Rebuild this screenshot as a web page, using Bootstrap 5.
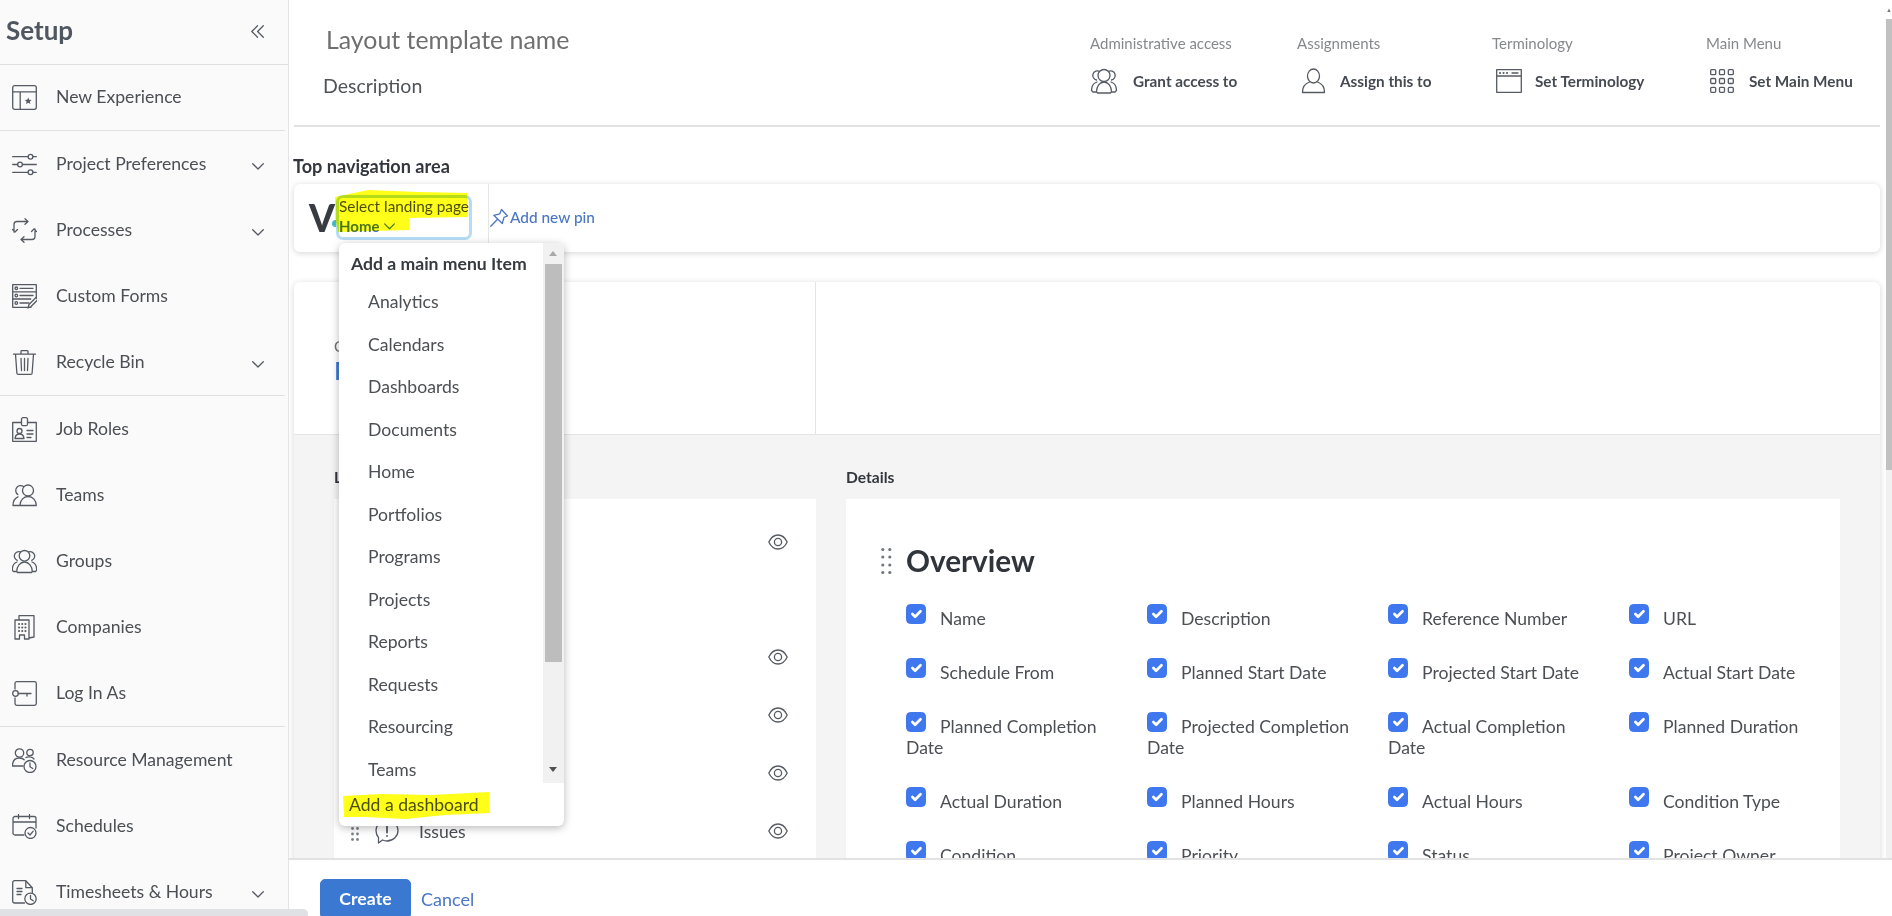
<!doctype html>
<html lang="en"><head><meta charset="utf-8"><title>Layout template</title>
<link href="https://cdn.jsdelivr.net/npm/bootstrap@5.3.0/dist/css/bootstrap.min.css" rel="stylesheet">
<style>
html,body{height:916px;overflow:hidden}
body{font-family:"Lato","Open Sans",sans-serif;font-size:17.6px;color:#4c4f54;background:#fff}
.ico{fill:none;stroke:#565b63;stroke-width:1.3;stroke-linecap:round;stroke-linejoin:round;flex:none}
.ico.chev-blue{stroke:#4a76c4}
.page-wrap{height:916px}
.side-pane{width:289px;flex:none;background:#fafafa;border-right:1px solid #e4e4e4;overflow:hidden}
.side-head{height:65px;flex:none;border-bottom:1px solid #e0e0e0;padding:0 24px 2px 6px}
.side-title{font-size:26px;font-weight:700;color:#505760;margin:0;line-height:1.2}
.side-group{flex:none;border-bottom:1px solid #e0e0e0;margin-right:3px}
.side-group:last-child{border-bottom:0}
.side-row{height:66px;padding:0 21px 0 12px;gap:19px}
.side-row.short-row{height:65px}
.side-row .chev{margin-left:auto;margin-top:4px}
.hbar{position:absolute;left:0;bottom:0;width:308px;height:7px;background:#dfe1e5;border-top-right-radius:5px;z-index:5}
.main-pane{min-width:0}
.view-area{min-height:0;overflow:hidden}
.view-col{padding-left:5px;min-width:0}
.rail{width:6px;margin-left:6px;flex:none;background:#f1f1f1}
.rail-top{height:19px;background:#fff;color:#777;font-size:6px;line-height:19px;text-align:center}
.rail-thumb{height:451px;background:#c1c1c1}
.top-head{height:127px;border-bottom:2px solid #e2e2e2}
.name-col{padding:23px 0 0 30px}
.tpl-name{font-size:24.9px;color:#6f6f6f;line-height:32px;margin:0 0 0 2px}
.tpl-desc{font-size:19.5px;color:#505357;line-height:26px;margin-top:18px;margin-left:-1px}
.acts{display:grid;grid-template-columns:207px 195px 214px 174px;padding-top:33px}
.act-label{font-size:15px;color:#86898c;line-height:20px;margin-bottom:14px}
.act-row{height:28px}
.act-icon{width:43px;flex:none}
.act-text{font-size:15.3px;font-weight:700;color:#464a52}
.sect-label{font-size:18.1px;font-weight:700;color:#33373d;line-height:22px;margin:28px 0 7px -1px}
.soft-card{background:#fff;border-radius:6px;box-shadow:0 1px 6px rgba(0,0,0,.17)}
.nav-card{height:68px;margin-bottom:30px}
.logo-slot{width:42px;flex:none;position:relative;padding-left:15px;font-size:37px;font-weight:900;color:#383b3f;line-height:68px}
.logo-dot{position:absolute;left:38px;top:36px;width:7px;height:7px;border-radius:50%;background:#45b7c4}
.land-slot{width:153px;flex:none;position:relative;border-right:1px solid #e6e6e6;height:68px;padding-top:11px}
.land-box{position:relative;width:136px;height:45px;border:3px solid #b6dcf5;border-radius:7px}
.land-top{font-size:15.4px;line-height:19px;margin-top:-1px;white-space:nowrap;color:#4c4f54}
.land-home{font-size:15px;font-weight:700;line-height:20px;color:#4a76c4}
.marker{position:absolute;mix-blend-mode:multiply;pointer-events:none}
.marker-top{left:-6px;top:-9px;z-index:2}
.pin-link{font-size:15.4px;font-weight:500;color:#4a76c4;gap:1px;text-decoration:none}
.pick-menu{display:flex;flex-direction:column;position:absolute;left:3px;top:59px;width:225px;height:583px;padding:0;margin:0;border:0;border-radius:6px;box-shadow:0 2px 9px rgba(0,0,0,.28);z-index:20;overflow:hidden;color:#4c4f54;font-size:17.6px}
.pick-body{height:540px;flex:none}
.pick-list{min-width:0}
.pick-title{height:38px;padding:4px 0 0 12px;line-height:34px;font-size:17.6px;font-weight:700;color:#363a40;white-space:nowrap}
.pick-item{height:42.5px;line-height:42.5px;padding:0 0 0 29px;color:#4c4f54}
.pick-rail{width:21px;flex:none;background:#f1f1f1;padding:0 2px}
.arrow-up,.arrow-dn{height:21px;position:relative}
.arrow-up:after,.arrow-dn:after{content:"";position:absolute;left:4px;border-left:4.5px solid transparent;border-right:4.5px solid transparent}
.arrow-up:after{top:8px;border-bottom:5px solid #a8a8a8}
.arrow-dn:after{top:5px;border-top:5px solid #505050}
.pick-thumb{height:398px;background:#bdbdbd}
.pick-foot{position:relative;flex:1;padding:5px 0 0 10px;line-height:34px;color:#4c4f54}
.marker-foot{left:2px;top:8px}
.lay-card{overflow:hidden;border-radius:6px 6px 0 0;height:620px}
.lay-top{height:153px;border-bottom:1px solid #e4e4e4}
.lay-top-left{width:522px;flex:none;border-right:1px solid #e4e4e4;padding:3px 0 0 40px}
.ghost-a{font-size:15px;line-height:20px;color:#6d7074}
.ghost-b{font-size:25px;font-weight:500;line-height:28px;color:#3a78d2}
.lay-low{background:#f4f4f4;padding:31px 40px 0;height:467px;gap:30px}
.low-left{width:482px;flex:none}
.low-right{width:994px;flex:none}
.low-label{font-size:15.6px;font-weight:700;color:#33373d;line-height:22px;margin-bottom:11px}
.panel-white{background:#fff;height:400px}
.panel-left{padding-top:14px}
.vis-row{height:58px;padding:0 28px 0 17px}
.vis-row.first-row{margin-bottom:57px}
.vis-name{margin:3px 0 0 20px}
.panel-right{padding:44px 0 0 35px}
.ov-head{height:36px;margin-bottom:29px}
.grip-slot{width:25px;flex:none}
.ov-title{font-size:29.7px;font-weight:700;color:#30353c;line-height:36px;margin:0}
.field-grid{display:grid;grid-template-columns:repeat(4,241px);padding-left:25px}
.field-cell{line-height:21px;padding:0 36px 33px 0}
.field-check{width:20px;height:20px;margin:-4px 14px 0 0;vertical-align:top;border-radius:3px;float:none}
.field-check:checked{background-color:#3f78ee;border-color:#3f78ee}
.foot-bar{height:58px;flex:none;border-top:2px solid #e2e2e2;background:#fff;padding:19px 0 0 31px;overflow:hidden;gap:10px}
.go-btn{width:91px;height:40px;padding:0;background:#3a78d2;border-color:#3a78d2;font-size:17.7px;font-weight:700;border-radius:5px;line-height:38px}
.stop-link{font-size:18px;color:#4a76c4;text-decoration:none;line-height:40px}
</style></head>
<body>
<svg width="0" height="0" class="position-absolute">
<defs>
<symbol id="i-chev" viewBox="0 0 12 7"><path d="M.7.7 6 6l5.3-5.3"/></symbol>
<symbol id="i-eye" viewBox="0 0 20 16"><path d="M.8 8C3 3.4 6.2 1 10 1s7 2.4 9.2 7c-2.2 4.600-5.400 7-9.200 7S3 12.600.8 8Z"/><circle cx="10" cy="8" r="3.600"/></symbol>
</defs>
</svg>
<div class="page-wrap d-flex position-relative">
<aside class="side-pane d-flex flex-column">
<div class="side-head d-flex align-items-center justify-content-between">
<h1 class="side-title">Setup</h1>
<svg class="ico" width="13" height="13" viewBox="0 0 13 13"><path d="M6.500.8.800 6.500l5.700 5.700M12.300.8 6.600 6.500l5.700 5.700"/></svg>
</div>
<div class="side-group">
<div class="side-row short-row d-flex align-items-center"><svg class="ico" width="25" height="25" viewBox="0 0 25 25"><rect x=".7" y=".7" width="23.600" height="23.600" rx="2"/><path d="M.7 6.800h23.600M8.200 6.800v17.500"/><path d="m16.200 12.500 1 2.300 2.500.2-1.900 1.600.6 2.400-2.200-1.300-2.200 1.300.6-2.400-1.900-1.600 2.500-.2Z" fill="#565b63" stroke="none"/></svg><span>New Experience</span></div>
</div>
<div class="side-group">
<div class="side-row d-flex align-items-center"><svg class="ico" width="25" height="25" viewBox="0 0 25 25"><path d="M.7 4.700h15.300M21 4.700h3.300M.7 12.500h5M10.500 12.500h13.800M.7 20.300h15.300M21 20.300h3.300"/><circle cx="18.500" cy="4.700" r="2.400"/><circle cx="8" cy="12.500" r="2.400"/><circle cx="18.500" cy="20.300" r="2.400"/></svg><span>Project Preferences</span><svg class="ico chev" width="12" height="7"><use href="#i-chev"/></svg></div>
<div class="side-row d-flex align-items-center"><svg class="ico" width="25" height="25" viewBox="0 0 25 25"><path d="M2 14V6.500a3 3 0 0 1 3-3h10.500M13 .8l3 2.700-3 2.700M23 11v7.500a3 3 0 0 1-3 3H9.500M12 18.800l-3 2.700 3 2.700M.5 11.500 3 14l2.500-2.500M19.500 13.500 22 11l2.500 2.500"/></svg><span>Processes</span><svg class="ico chev" width="12" height="7"><use href="#i-chev"/></svg></div>
<div class="side-row d-flex align-items-center"><svg class="ico" width="25" height="25" viewBox="0 0 25 25"><path d="M19 23.300H.7V.7h23.600v15"/><path d="M.7 7.800h23.600M.7 15h18M8 4.300h13M8 11.500h13M8 19h9"/><circle cx="4.300" cy="4.300" r="1.300"/><circle cx="4.300" cy="11.500" r="1.300"/><circle cx="4.300" cy="19" r="1.300"/><path d="m16 24 1-3.500 7-7 2 2-7 7Z" fill="#fafafa"/></svg><span>Custom Forms</span></div>
<div class="side-row d-flex align-items-center"><svg class="ico" width="25" height="25" viewBox="0 0 25 25"><path d="M1.500 4.200h22M9 4V1.300a.6.6 0 0 1 .6-.6h5.800a.6.6 0 0 1 .6.600V4M3.500 4.200l1.400 19a1.200 1.200 0 0 0 1.200 1.100h12.800a1.200 1.200 0 0 0 1.200-1.100l1.400-19M9 8.500l.5 12M12.500 8.500v12M16 8.500l-.5 12"/></svg><span>Recycle Bin</span><svg class="ico chev" width="12" height="7"><use href="#i-chev"/></svg></div>
</div>
<div class="side-group">
<div class="side-row d-flex align-items-center"><svg class="ico" width="25" height="25" viewBox="0 0 25 25"><path d="M9.500 5.500H.7v18.800h23.600V5.500h-8.800"/><rect x="9.500" y=".7" width="6" height="8" rx="1.500"/><circle cx="7.500" cy="14" r="2.500"/><path d="M3 21.500c.3-3 2-4.500 4.500-4.500s4.200 1.500 4.500 4.500ZM15 13.500h6M15 17h6M15 20.500h4"/></svg><span>Job Roles</span></div>
<div class="side-row d-flex align-items-center"><svg class="ico" width="25" height="25" viewBox="0 0 25 25"><circle cx="16" cy="7.500" r="5.500"/><path d="M11.500 3.500A4.700 4.700 0 1 0 5.800 11.500M8 22.500h16.300c0-5-3.500-9-8.200-9s-8.100 4-8.100 9ZM1 22.500h7M1 22.500c0-4.500 2-7.500 5-8.700"/></svg><span>Teams</span></div>
<div class="side-row d-flex align-items-center"><svg class="ico" width="25" height="25" viewBox="0 0 25 25"><circle cx="12.500" cy="6.800" r="5.300"/><path d="M8.300 2.900A4.300 4.300 0 1 0 5.300 11.300M16.700 2.900A4.300 4.300 0 1 1 19.700 11.300M5.500 23.500h14l.8-1c0-5-3.500-9.500-7.800-9.500s-7.800 4.500-7.800 9.500ZM5 13C2 14 .3 17.500.3 21l1 1.500h3M20 13c3 1 4.700 4.500 4.700 8l-1 1.500h-3"/></svg><span>Groups</span></div>
<div class="side-row d-flex align-items-center"><svg class="ico" width="25" height="25" viewBox="0 0 25 25"><path d="M3 24V5h14v19h-4.500v-4h-5v4ZM7 5V.7h15V22l-5 1"/><path d="M7 9h.1M10.200 9h.1M13.400 9h.1M7 12.500h.1M10.200 12.500h.1M13.400 12.500h.1M7 16h.1M10.200 16h.1M13.400 16h.1" stroke-width="2"/></svg><span>Companies</span></div>
<div class="side-row d-flex align-items-center"><svg class="ico" width="25" height="25" viewBox="0 0 25 25"><path d="M3 8V2.500A1.800 1.800 0 0 1 4.800.7h17.700a1.800 1.800 0 0 1 1.800 1.800v20a1.800 1.800 0 0 1-1.800 1.800H4.800A1.800 1.800 0 0 1 3 22.500V17"/><circle cx="3.500" cy="12.500" r="2.800"/><path d="M6.300 12.500H19M15 12.500v2.500"/></svg><span>Log In As</span></div>
</div>
<div class="side-group">
<div class="side-row d-flex align-items-center"><svg class="ico" width="25" height="25" viewBox="0 0 25 25"><circle cx="7.500" cy="5" r="4.200"/><circle cx="18" cy="4.500" r="3.200"/><path d="M.5 18c0-5 2.500-8 7-8 2 0 3.600.6 4.700 1.800M.5 18h10.500M14 9.500c1.200-1 6-1.200 8 1.500"/><circle cx="18" cy="18.500" r="6"/><path d="M18 15v3.700l2.800 1.800"/></svg><span>Resource Management</span></div>
<div class="side-row d-flex align-items-center"><svg class="ico" width="25" height="25" viewBox="0 0 25 25"><path d="M12 21H3a2 2 0 0 1-2-2V4.500a2 2 0 0 1 2-2h19a2 2 0 0 1 2 2V14M1 8h23M6.500.5v4M17.500.5v4"/><circle cx="18.500" cy="19" r="5.500"/><path d="m16 19 2 2 3.200-3.800"/></svg><span>Schedules</span></div>
<div class="side-row d-flex align-items-center"><svg class="ico" width="25" height="25" viewBox="0 0 25 25"><path d="M12.500 23H2.500a1.800 1.800 0 0 1-1.800-1.800V2.500A1.800 1.800 0 0 1 2.500.7h11.300l6.500 7v5.500M13.800.7v7h6.500M5 8.500h5M5 11.500h5M5 14.500h4"/><circle cx="18.500" cy="18.800" r="5.700"/><path d="M18.500 15.300v3.700l2.700 1.800"/></svg><span>Timesheets &amp; Hours</span><svg class="ico chev" width="12" height="7"><use href="#i-chev"/></svg></div>
</div>
</aside>
<div class="hbar"></div>
<main class="main-pane flex-grow-1 d-flex flex-column">
<div class="view-area flex-grow-1 d-flex">
<div class="view-col flex-grow-1">
<header class="top-head d-flex justify-content-between">
<div class="name-col"><p class="tpl-name">Layout template name</p><div class="tpl-desc">Description</div></div>
<div class="acts">
<div><div class="act-label">Administrative access</div><div class="act-row d-flex align-items-center"><span class="act-icon"><svg class="ico d-block" width="28" height="26" viewBox="0 0 28 26"><circle cx="14" cy="7.500" r="6"/><path d="M9.500 3.400A4.600 4.600 0 1 0 6.500 12M18.500 3.400A4.600 4.600 0 1 1 21.500 12M7.500 25h13l1-1.200c0-5.500-3.300-9.800-7.500-9.800s-7.500 4.300-7.500 9.800ZM7 14c-3.500 1-5.500 4.500-5.500 8.500L3 24h3M21 14c3.500 1 5.500 4.500 5.500 8.500L25 24h-3"/></svg></span><span class="act-text">Grant access to</span></div></div>
<div><div class="act-label">Assignments</div><div class="act-row d-flex align-items-center"><span class="act-icon"><svg class="ico d-block ms-1" width="25" height="26" viewBox="0 0 25 26"><ellipse cx="12.500" cy="8" rx="6" ry="7"/><path d="M8.500 14C4 15.500 1.500 19.500 1.500 24.500h22C23.500 19.500 21 15.500 16.500 14"/></svg></span><span class="act-text">Assign this to</span></div></div>
<div><div class="act-label">Terminology</div><div class="act-row d-flex align-items-center"><span class="act-icon"><svg class="ico d-block ms-1" width="26" height="24" viewBox="0 0 26 24"><rect x=".7" y=".7" width="24.600" height="22.600"/><path d="M.7 7h24.600M16 4h6"/><path d="M4 4h.1M7.500 4h.1M11 4h.1" stroke-width="2"/></svg></span><span class="act-text">Set Terminology</span></div></div>
<div><div class="act-label">Main Menu</div><div class="act-row d-flex align-items-center"><span class="act-icon"><svg class="ico d-block ms-1" width="24" height="24" viewBox="0 0 24 24"><rect x=".7" y=".7" width="5" height="5" rx="1"/><rect x="9.500" y=".7" width="5" height="5" rx="1"/><rect x="18.300" y=".7" width="5" height="5" rx="1"/><rect x=".7" y="9.500" width="5" height="5" rx="1"/><rect x="9.500" y="9.500" width="5" height="5" rx="1"/><rect x="18.300" y="9.500" width="5" height="5" rx="1"/><rect x=".7" y="18.300" width="5" height="5" rx="1"/><rect x="9.500" y="18.300" width="5" height="5" rx="1"/><rect x="18.300" y="18.300" width="5" height="5" rx="1"/></svg></span><span class="act-text">Set Main Menu</span></div></div>
</div>
</header>
<div class="sect-label">Top navigation area</div>
<section class="soft-card nav-card d-flex">
<div class="logo-slot">V<span class="logo-dot"></span></div>
<div class="land-slot">
<div class="land-box">
<div class="land-top">Select landing page</div>
<div class="land-home d-flex align-items-center gap-1">Home <svg class="ico chev-blue" width="11" height="7"><use href="#i-chev"/></svg></div>
<svg class="marker marker-top" width="140" height="48" viewBox="0 0 140 48"><path d="M2 8 35 1l50 2 49 1 1 24-59 1v12L5 43 2 28Z" fill="#ffff1a"/></svg>
</div>
<div class="dropdown-menu show pick-menu">
<div class="pick-body d-flex">
<div class="pick-list flex-grow-1">
<div class="pick-title">Add a main menu Item</div>
<div class="pick-item">Analytics</div>
<div class="pick-item">Calendars</div>
<div class="pick-item">Dashboards</div>
<div class="pick-item">Documents</div>
<div class="pick-item">Home</div>
<div class="pick-item">Portfolios</div>
<div class="pick-item">Programs</div>
<div class="pick-item">Projects</div>
<div class="pick-item">Reports</div>
<div class="pick-item">Requests</div>
<div class="pick-item">Resourcing</div>
<div class="pick-item">Teams</div>
</div>
<div class="pick-rail d-flex flex-column"><div class="arrow-up"></div><div class="pick-thumb"></div><div class="flex-grow-1"></div><div class="arrow-dn"></div></div>
</div>
<div class="pick-foot">Add a dashboard
<svg class="marker marker-foot" width="152" height="30" viewBox="0 0 152 30"><path d="M2 5 40 3l50 1 58-3 1 21-45 2-40 4-40-2H3Z" fill="#ffff1a"/></svg>
</div>
</div>
</div>
<a class="pin-link d-flex align-items-center" href="#"><svg class="ico chev-blue" width="20" height="20" viewBox="0 0 20 20"><path d="M12.500 1.500 18.500 8 15 9.300 13.300 15.500 4.800 7.300 10.800 5.800ZM8 11.700 1.800 18.200"/></svg>Add new pin</a>
</section>
<section class="soft-card lay-card">
<div class="lay-top d-flex">
<div class="lay-top-left d-flex flex-column justify-content-center"><div class="ghost-a">C</div><div class="ghost-b">F</div></div>
</div>
<div class="lay-low d-flex">
<div class="low-left">
<div class="low-label">L</div>
<div class="panel-white panel-left">
<div class="vis-row first-row d-flex align-items-center"><svg class="ico ms-auto" width="20" height="16"><use href="#i-eye"/></svg></div>
<div class="vis-row d-flex align-items-center"><svg class="ico ms-auto" width="20" height="16"><use href="#i-eye"/></svg></div>
<div class="vis-row d-flex align-items-center"><svg class="ico ms-auto" width="20" height="16"><use href="#i-eye"/></svg></div>
<div class="vis-row d-flex align-items-center"><svg class="ico ms-auto" width="20" height="16"><use href="#i-eye"/></svg></div>
<div class="vis-row d-flex align-items-center">
<svg width="8" height="22" viewBox="0 0 8 22" class="me-3" fill="#7c8188"><circle cx="1.500" cy="3" r="1.400"/><circle cx="6.500" cy="3" r="1.400"/><circle cx="1.500" cy="8.500" r="1.400"/><circle cx="6.500" cy="8.500" r="1.400"/><circle cx="1.500" cy="14" r="1.400"/><circle cx="6.500" cy="14" r="1.400"/><circle cx="1.500" cy="19.500" r="1.400"/><circle cx="6.500" cy="19.500" r="1.400"/></svg>
<svg class="ico" width="24" height="26" viewBox="0 0 24 26"><path d="M3.500 25V19.500C1.800 17.500 1 15.300 1 12.500 1 7 5.500 2.500 12 2.500s11 4.500 11 10S18.500 23 12 23c-1.700 0-3-.3-4.500-1Z"/><path d="M12 7.500v7M12 17.800v.2" stroke-width="1.800"/></svg>
<span class="vis-name">Issues</span><svg class="ico ms-auto" width="20" height="16"><use href="#i-eye"/></svg></div>
</div>
</div>
<div class="low-right">
<div class="low-label">Details</div>
<div class="panel-white panel-right">
<div class="ov-head d-flex align-items-center"><div class="grip-slot"><svg class="d-block" width="11" height="28" viewBox="0 0 11 28" fill="#72777e"><circle cx="1.800" cy="2.500" r="1.600"/><circle cx="8.800" cy="2.500" r="1.600"/><circle cx="1.800" cy="10" r="1.600"/><circle cx="8.800" cy="10" r="1.600"/><circle cx="1.800" cy="18" r="1.600"/><circle cx="8.800" cy="18" r="1.600"/><circle cx="1.800" cy="25.500" r="1.600"/><circle cx="8.800" cy="25.500" r="1.600"/></svg></div><h2 class="ov-title">Overview</h2></div>
<div class="field-grid">
<label class="field-cell"><input class="form-check-input field-check" type="checkbox" checked>Name</label>
<label class="field-cell"><input class="form-check-input field-check" type="checkbox" checked>Description</label>
<label class="field-cell"><input class="form-check-input field-check" type="checkbox" checked>Reference Number</label>
<label class="field-cell"><input class="form-check-input field-check" type="checkbox" checked>URL</label>
<label class="field-cell"><input class="form-check-input field-check" type="checkbox" checked>Schedule From</label>
<label class="field-cell"><input class="form-check-input field-check" type="checkbox" checked>Planned Start Date</label>
<label class="field-cell"><input class="form-check-input field-check" type="checkbox" checked>Projected Start Date</label>
<label class="field-cell"><input class="form-check-input field-check" type="checkbox" checked>Actual Start Date</label>
<label class="field-cell"><input class="form-check-input field-check" type="checkbox" checked>Planned Completion Date</label>
<label class="field-cell"><input class="form-check-input field-check" type="checkbox" checked>Projected Completion Date</label>
<label class="field-cell"><input class="form-check-input field-check" type="checkbox" checked>Actual Completion Date</label>
<label class="field-cell"><input class="form-check-input field-check" type="checkbox" checked>Planned Duration</label>
<label class="field-cell"><input class="form-check-input field-check" type="checkbox" checked>Actual Duration</label>
<label class="field-cell"><input class="form-check-input field-check" type="checkbox" checked>Planned Hours</label>
<label class="field-cell"><input class="form-check-input field-check" type="checkbox" checked>Actual Hours</label>
<label class="field-cell"><input class="form-check-input field-check" type="checkbox" checked>Condition Type</label>
<label class="field-cell"><input class="form-check-input field-check" type="checkbox" checked>Condition</label>
<label class="field-cell"><input class="form-check-input field-check" type="checkbox" checked>Priority</label>
<label class="field-cell"><input class="form-check-input field-check" type="checkbox" checked>Status</label>
<label class="field-cell"><input class="form-check-input field-check" type="checkbox" checked>Project Owner</label>
</div>
</div>
</div>
</div>
</section>
</div>
<div class="rail d-flex flex-column"><div class="rail-top">▲</div><div class="rail-thumb"></div></div>
</div>
<footer class="foot-bar d-flex align-items-start">
<button type="button" class="btn btn-primary go-btn">Create</button>
<a href="#" class="stop-link">Cancel</a>
</footer>
</main>
</div>
</body></html>
